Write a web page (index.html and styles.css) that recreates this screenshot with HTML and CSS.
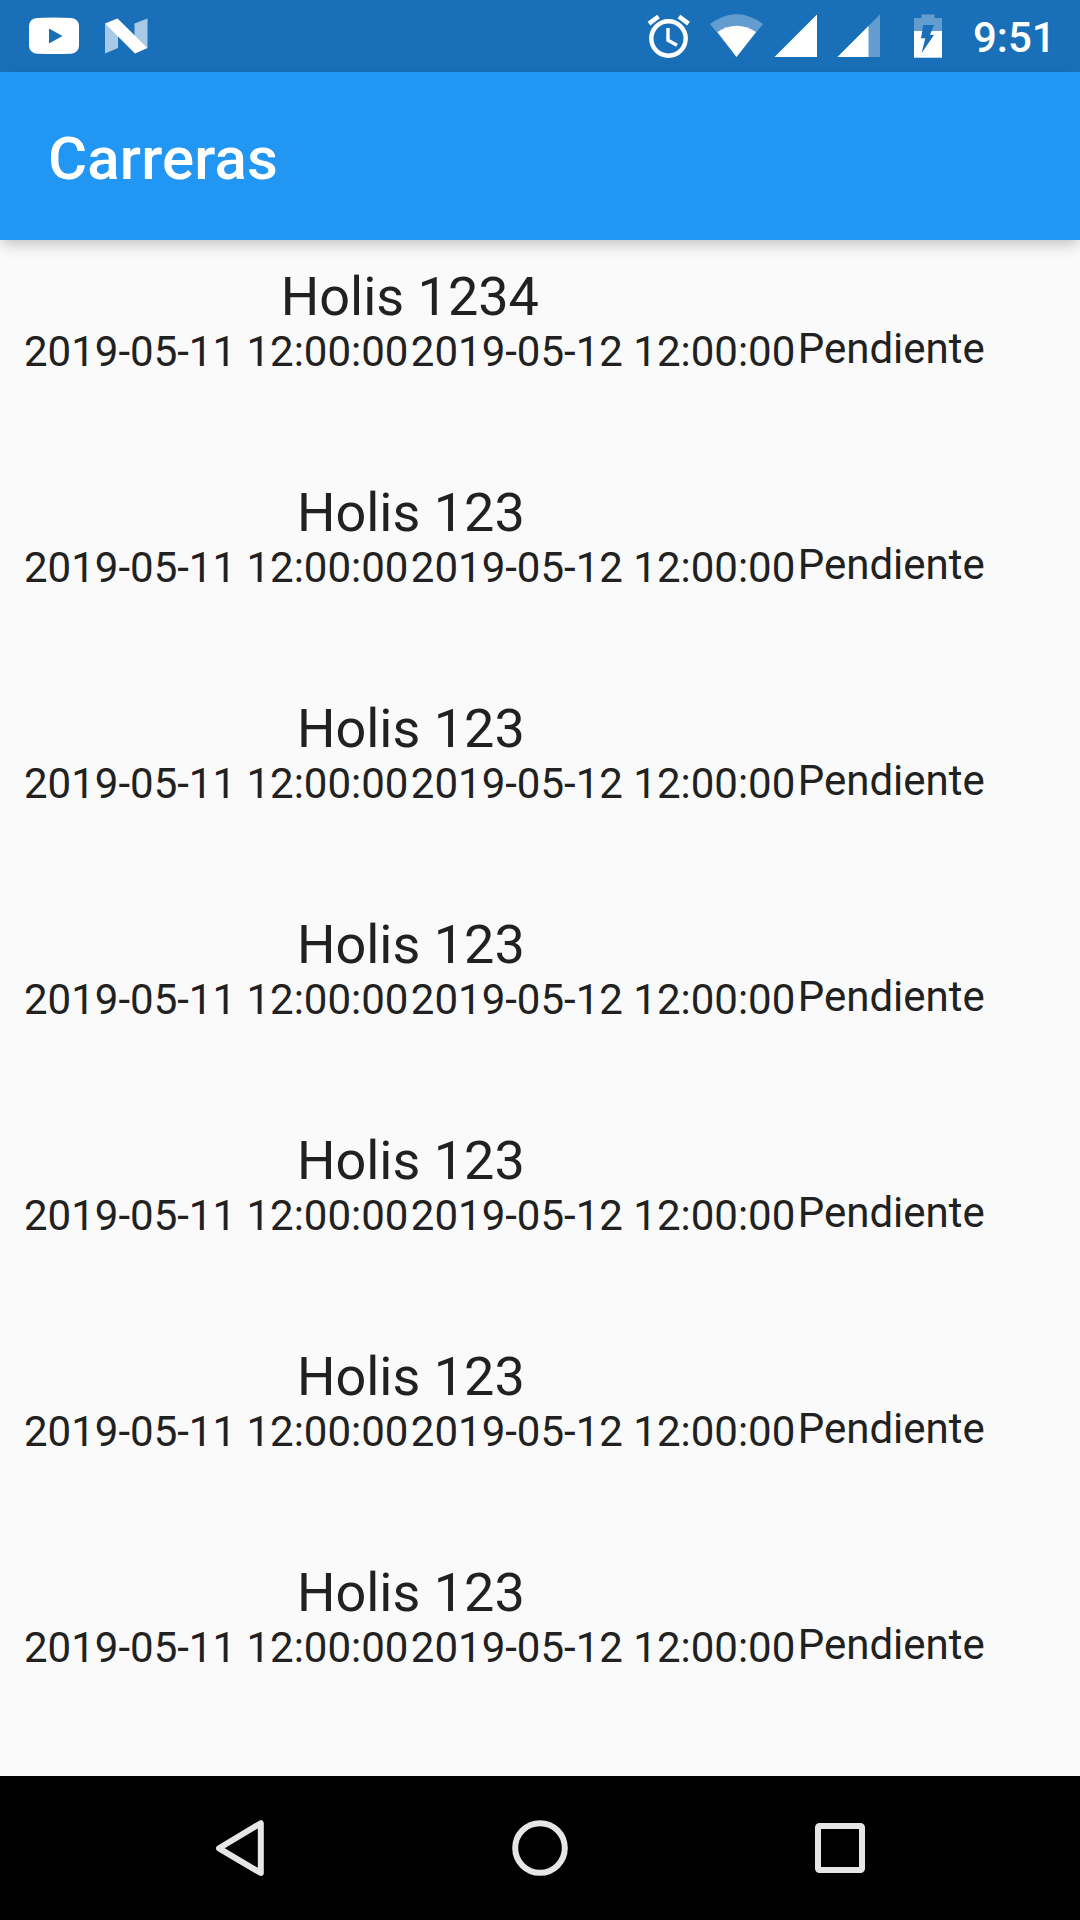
FILE: index.html
```html
<!DOCTYPE html>
<html lang="es">
<head>
<meta charset="utf-8">
<title>Carreras</title>
<link rel="stylesheet" href="styles.css">
</head>
<body>
<div class="screen">
  <div class="status-bar">
    <svg width="60" height="72" viewBox="24 0 60 72"><path fill="#fff" fill-rule="evenodd" d="M37 18Q54 17 71 18Q78.500 18.500 79 26V46Q78.500 53 71 53.700Q54 54.500 37 53.700Q29.500 53 29 46V26Q29.500 18.500 37 18ZM49 28.500V43.500L62.500 36Z"/></svg>
    <svg width="72" height="72" viewBox="84 0 72 72"><path fill="#a8cae6" d="M105 23.500L118 31V48L105 53.500ZM134.500 23.500L147.500 18.500V48L134.500 36Z"/><path fill="#fff" d="M105 23.500L117.500 18.500L147.500 48L135 53.500Z"/></svg>
    <div class="status-right">
      <svg width="68" height="72" viewBox="636 0 68 72"><g fill="none" stroke="#fff"><circle cx="668.500" cy="38.500" r="17.200" stroke-width="4.400"/><path d="M668 28V40.300L677 45.200" stroke-width="3.400"/><path d="M649 23.700L658.500 16.500M688.500 23.700L679 16.500" stroke-width="4.600"/></g></svg>
      <svg width="64" height="72" viewBox="704 0 64 72"><path fill="#639dcf" d="M736.500 57L710 24Q736.500 4.500 763 24Z"/><path fill="#fff" d="M736.500 57L717.500 32Q736.500 19.500 756 32Z"/></svg>
      <svg width="60" height="72" viewBox="768 0 60 72"><path fill="#fff" d="M774.500 57H817V14.500Z"/></svg>
      <svg width="64" height="72" viewBox="828 0 64 72"><path fill="#639dcf" d="M837.500 57H880V14.500Z"/><path fill="#fff" d="M837.500 57H868.500V26Z"/></svg>
      <svg width="81" height="72" viewBox="892 0 81 72"><path fill="#639dcf" d="M914 18H921.500V14.500H934.500V18H942V31H914Z"/><path fill="#fff" d="M914 31H942V57.700H914Z"/><path fill="#1a70b8" d="M923.300 25H934L930 35H934L921.500 53.300L925.300 38.300H921Z"/></svg>
      <span class="clock">9:51</span>
    </div>
  </div>
  <header class="app-bar"><h1>Carreras</h1></header>
  <main class="list">
    <div class="item"><div class="race"><div class="name long">Holis 1234</div><div class="dates"><span>2019-05-11 12:00:00</span><span>2019-05-12 12:00:00</span></div></div><div class="state">Pendiente</div></div>
    <div class="item"><div class="race"><div class="name">Holis 123</div><div class="dates"><span>2019-05-11 12:00:00</span><span>2019-05-12 12:00:00</span></div></div><div class="state">Pendiente</div></div>
    <div class="item"><div class="race"><div class="name">Holis 123</div><div class="dates"><span>2019-05-11 12:00:00</span><span>2019-05-12 12:00:00</span></div></div><div class="state">Pendiente</div></div>
    <div class="item"><div class="race"><div class="name">Holis 123</div><div class="dates"><span>2019-05-11 12:00:00</span><span>2019-05-12 12:00:00</span></div></div><div class="state">Pendiente</div></div>
    <div class="item"><div class="race"><div class="name">Holis 123</div><div class="dates"><span>2019-05-11 12:00:00</span><span>2019-05-12 12:00:00</span></div></div><div class="state">Pendiente</div></div>
    <div class="item"><div class="race"><div class="name">Holis 123</div><div class="dates"><span>2019-05-11 12:00:00</span><span>2019-05-12 12:00:00</span></div></div><div class="state">Pendiente</div></div>
    <div class="item"><div class="race"><div class="name">Holis 123</div><div class="dates"><span>2019-05-11 12:00:00</span><span>2019-05-12 12:00:00</span></div></div><div class="state">Pendiente</div></div>
  </main>
  <nav class="nav-bar">
    <svg width="300" height="144" viewBox="90 1776 300 144"><path d="M219 1848.300L260.800 1823.200V1873Z"/></svg>
    <svg width="300" height="144" viewBox="390 1776 300 144"><circle cx="540" cy="1848" r="24.800"/></svg>
    <svg width="300" height="144" viewBox="690 1776 300 144"><rect x="818" y="1826" width="44" height="44" rx="1.500"/></svg>
  </nav>
</div>
</body>
</html>
```
FILE: styles.css
```css
* { box-sizing: border-box; }
body { margin: 0; background: #fafafa; font-family: Roboto, sans-serif; color: #212121; }
svg { display: block; flex: none; }
.screen { display: flex; flex-direction: column; width: 1080px; height: 1920px; overflow: hidden; }
.status-bar { flex: none; display: flex; height: 72px; padding-left: 24px; background: #1a70b8; color: #fff; }
.status-right { display: flex; width: 444px; margin-left: auto; }
.clock { font-size: 42px; font-weight: 500; line-height: 76px; white-space: nowrap; }
.app-bar { flex: none; display: flex; align-items: center; height: 168px; padding: 5px 0 0 48px; background: #2196f3; color: #fff; box-shadow: 0 6px 12px -3px rgba(0,0,0,.16), 0 12px 15px rgba(0,0,0,.03), 0 3px 18px rgba(0,0,0,.06); }
.app-bar h1 { margin: 0; font-size: 60px; font-weight: 500; line-height: 70px; letter-spacing: .15px; }
.list { flex: 1; padding-top: 24px; }
.item { display: flex; height: 216px; padding-left: 24px; white-space: nowrap; }
.race { display: flex; flex-direction: column; align-items: center; }
.name { height: 63px; font-size: 54px; line-height: 65px; }
.name.long { padding-right: 2px; }
.dates { display: flex; font-size: 42px; line-height: 49px; }
.dates span { padding-right: 2.4px; }
.state { padding-top: 60px; font-size: 42px; line-height: 49px; }
.nav-bar { flex: none; display: flex; justify-content: center; height: 144px; background: #000; }
.nav-bar svg { fill: none; stroke: #e6e6e6; stroke-width: 6; stroke-linejoin: round; }
```
